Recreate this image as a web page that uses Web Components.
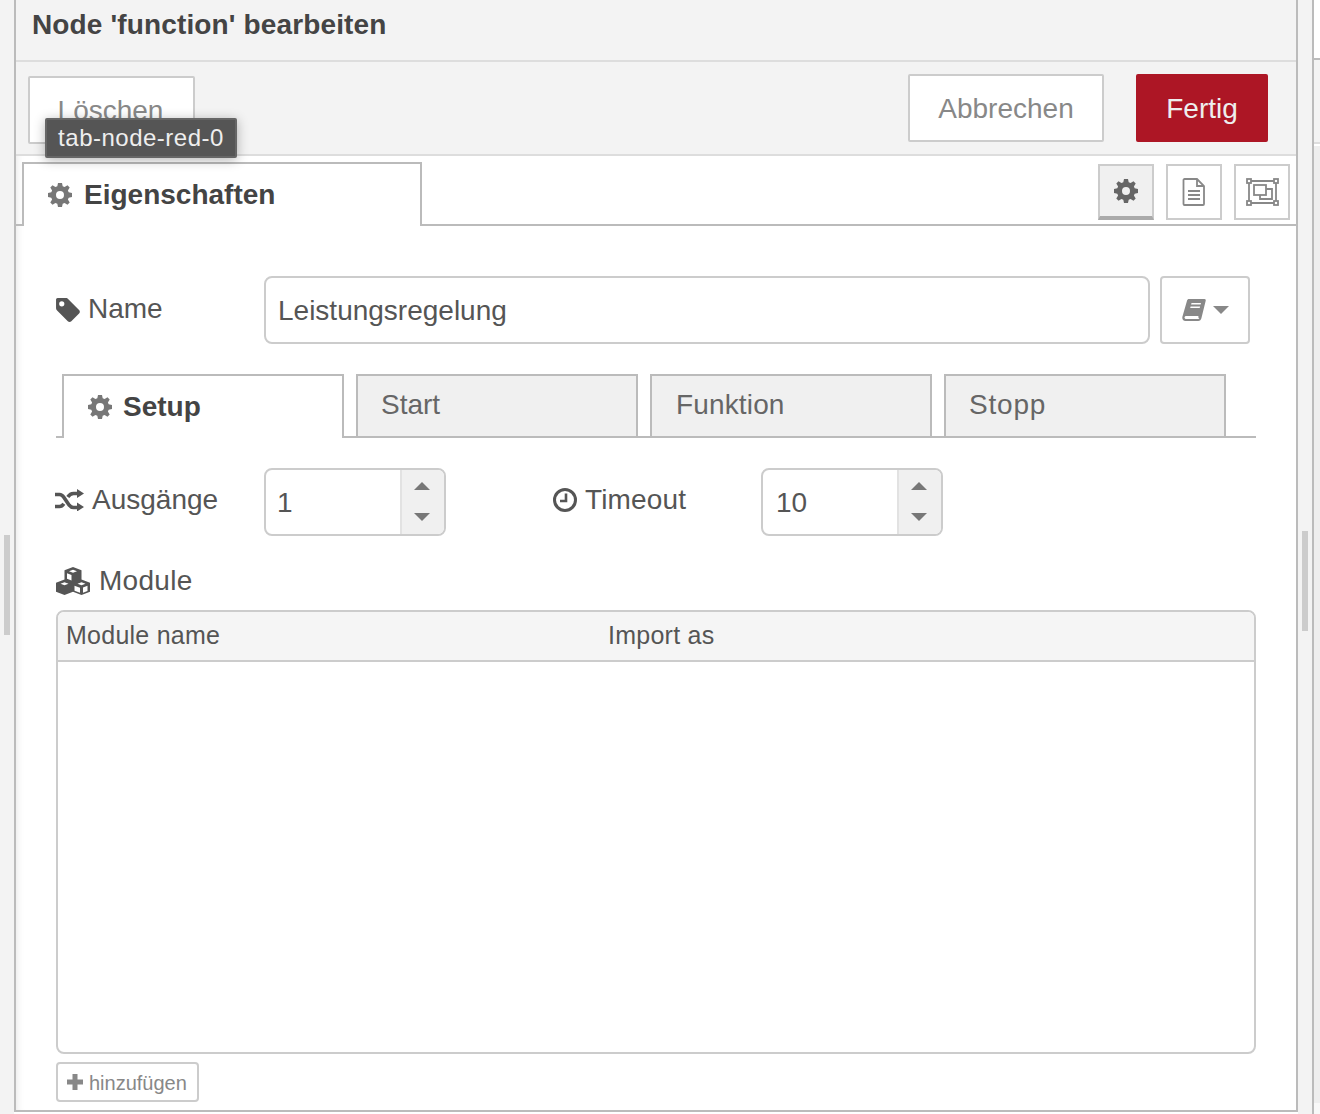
<!DOCTYPE html>
<html>
<head>
<meta charset="utf-8">
<title>Node 'function' bearbeiten</title>
<style>
  html, body { margin: 0; height: 100%; background: #fff; overflow: hidden; }
  body { font-family: "Liberation Sans", Arial, sans-serif; color: #555; }
</style>
</head>
<body>
<edit-tray></edit-tray>
<script>
const ICONS = {
  cog: `<svg viewBox="0 0 24 24" width="100%" height="100%"><path fill="currentColor" fill-rule="evenodd" d="M10 0h4l.7 3.3 1.900.8 2.900-1.800 2.200 2.200-1.800 2.900.8 1.900L24 10v4l-3.300.7-.8 1.900 1.800 2.900-2.200 2.200-2.900-1.800-1.900.8L14 24h-4l-.7-3.300-1.900-.8-2.900 1.800-2.200-2.200 1.800-2.900-.8-1.900L0 14v-4l3.300-.7.8-1.900-1.800-2.900 2.200-2.200 2.900 1.800 1.900-.8zM12 8a4 4 0 1 0 0 8 4 4 0 0 0 0-8z"/></svg>`,
  doc: `<svg viewBox="0 0 24 28" width="100%" height="100%" fill="none" stroke="currentColor" stroke-width="1.800"><path d="M2.500 1h12.500l7 7v18a1 1 0 0 1-1 1H2.500a1 1 0 0 1-1-1V2a1 1 0 0 1 1-1zM15 1v7h7"/><path d="M6 13h12M6 17h12M6 21h12"/></svg>`,
  frame: `<svg viewBox="0 0 33 28" width="100%" height="100%" fill="none" stroke="currentColor" stroke-width="1.800"><path d="M4 3h25M4 25h25M3 4v20M30 4v20"/><rect x="1" y="1" width="4" height="4" fill="#fff"/><rect x="28" y="1" width="4" height="4" fill="#fff"/><rect x="1" y="23" width="4" height="4" fill="#fff"/><rect x="28" y="23" width="4" height="4" fill="#fff"/><rect x="8" y="7" width="12" height="10"/><path d="M20 11h6v10H14v-4"/></svg>`,
  book: `<svg viewBox="0 0 24 24" width="100%" height="100%"><path fill="currentColor" fill-rule="evenodd" d="M7 1h15.500c1 0 1.500.8 1.200 1.800l-4.300 17.400c-.4 1.500-1.500 2.800-3.200 2.800H3.500C1.500 23 0 21.500.3 19.300c.1-.6.2-1 .4-1.500L5 2.700C5.300 1.700 6 1 7 1zM9.500 5l-.4 1.500h9.500L19 5zM8.600 8.500l-.4 1.500h9.500l.4-1.500zM4.500 18c-1.300 0-2 .7-2 1.500s.7 1.500 1.800 1.500h11.800c.6 0 1-.3 1.300-1-.4 0-.9-.1-1-.5-.2-.5-.1-1 .1-1.500z"/></svg>`,
  tag: `<svg viewBox="0 0 24 24" width="100%" height="100%"><path fill="currentColor" fill-rule="evenodd" d="M2.500 1h8c.9 0 1.700.5 2.300 1.100l10.300 10.300c1 1 1 2.500 0 3.500l-7.400 7.400c-1 .9-2.500.9-3.400 0L2 13c-.6-.6-1-1.500-1-2.300V2.500C1 1.700 1.700 1 2.500 1zM6.500 4a2.500 2.500 0 1 0 0 5 2.500 2.500 0 0 0 0-5z"/></svg>`,
  random: `<svg viewBox="0 0 29 22" width="100%" height="100%" fill="none" stroke="currentColor" stroke-width="3.600"><path d="M0 5.500h4.500c2 0 3.200 1 4.300 2.700l5.400 8c1 1.300 2.300 2.300 4.300 2.300h4.500"/><path d="M0 17.500h4.500c2 0 3.200-1 4.300-2.700M12.800 8c1.100-1.700 2.600-3.500 5.700-3.500h4.500"/><path fill="currentColor" stroke="none" d="M22 0l7 4.500-7 4.500zM22 13.500l7 4.500-7 4.500z"/></svg>`,
  clock: `<svg viewBox="0 0 24 24" width="100%" height="100%" fill="none" stroke="currentColor"><circle cx="12" cy="12" r="10.500" stroke-width="3"/><path stroke-width="2.600" d="M13 5.500v7.500H7"/></svg>`,
  cubes: `<svg viewBox="0 0 36 28" width="100%" height="100%"><path fill="currentColor" fill-rule="evenodd" d="M18 0l8.500 3.200v9.300l8.500 3.200v9L26.500 28 18 24.800 9.500 28 1 24.700v-9l8.500-3.200V3.200zM18 2.800l-4 1.400 4 1.500 4-1.500zM12 11.800l4.500 1.700V8l-4.500-1.700zM9.500 15.200l-4 1.500 4 1.500 4-1.500zM26.500 15.200l-4 1.500 4 1.500 4-1.500zM19.500 23.700l5.500 2v-5l-5.500-2zM28 25.700l4.500-1.800v-5.100l-4.500 1.800z"/></svg>`,
  plus: `<svg viewBox="0 0 16 16" width="100%" height="100%"><path fill="currentColor" d="M5.500 0h5v5.500H16v5h-5.500V16h-5v-5.500H0v-5h5.500z"/></svg>`
};

class RedIcon extends HTMLElement {
  connectedCallback() {
    this.attachShadow({ mode: "open" }).innerHTML = `
      <style>:host { display: inline-block; line-height: 0; flex: none; width: var(--w, 24px); height: var(--h, 24px); }</style>
      ${ICONS[this.getAttribute("name")]}`;
  }
}

class RedButton extends HTMLElement {
  constructor() {
    super();
    this.attachShadow({ mode: "open" }).innerHTML = `
      <style>
        :host {
          display: flex; align-items: center; justify-content: center; box-sizing: border-box;
          height: 68px; padding: 2px 28px 0; font-size: 28px; color: #888; background: #fff;
          border: 2px solid #ccc; border-radius: 2px;
        }
        :host([primary]) { background: #ad1625; border-color: #ad1625; color: #eee; }
      </style>
      <slot></slot>`;
  }
}

class NodeTab extends HTMLElement {
  constructor() {
    super();
    this.attachShadow({ mode: "open" }).innerHTML = `
      <style>
        :host {
          display: flex; align-items: center; box-sizing: border-box; width: 282px; height: 62px;
          padding: 0 24px 2px 23px; font-size: 28px; color: #666; background: #f0f0f0;
          border: 2px solid #bbb; border-bottom: 0;
        }
        :host([active]) { height: 64px; background: #fff; color: #444; font-weight: bold; padding: 0 24px; }
        ::slotted(red-icon) { margin-right: 12px; color: #777; --w: 24px; --h: 24px; }
      </style>
      <slot></slot>`;
  }
}

class IconToggle extends HTMLElement {
  constructor() {
    super();
    this.attachShadow({ mode: "open" }).innerHTML = `
      <style>
        :host {
          display: flex; align-items: center; justify-content: center; box-sizing: border-box;
          width: 56px; height: 56px; color: #888; background: #fff; border: 2px solid #ccc;
        }
        :host([selected]) { background: #f0f0f0; color: #666; border-bottom: 4px solid #aaa; }
      </style>
      <slot></slot>`;
  }
}

class SpinInput extends HTMLElement {
  constructor() {
    super();
    this.attachShadow({ mode: "open" }).innerHTML = `
      <style>
        :host {
          display: flex; box-sizing: border-box; width: 182px; height: 68px; font-size: 28px; color: #555;
          background: #fff; border: 2px solid #ccc; border-radius: 8px; overflow: hidden;
        }
        .value { flex: 1; padding-left: var(--pad, 11px); display: flex; align-items: center; padding-top: 2px; }
        .arrows {
          width: 44px; box-sizing: border-box; border-left: 2px solid #e2e2e2; background: #f0f0f0;
          display: flex; flex-direction: column; align-items: center; justify-content: space-between; padding: 12px 3px 13px 0;
        }
        .up, .down { width: 0; height: 0; border: 8px solid transparent; }
        .up { border-top: 0; border-bottom: 8px solid #777; }
        .down { border-bottom: 0; border-top: 8px solid #777; }
      </style>
      <div class="value"><slot></slot></div>
      <div class="arrows"><div class="up"></div><div class="down"></div></div>`;
  }
}

class FormLabel extends HTMLElement {
  constructor() {
    super();
    this.attachShadow({ mode: "open" }).innerHTML = `
      <style>
        :host { display: flex; align-items: center; font-size: 28px; color: #555; box-sizing: border-box; }
        ::slotted(red-icon) { margin-right: 8px; color: #555; }
      </style>
      <slot></slot>`;
  }
}

class ModuleTable extends HTMLElement {
  constructor() {
    super();
    this.attachShadow({ mode: "open" }).innerHTML = `
      <style>
        :host {
          display: flex; flex-direction: column; box-sizing: border-box; width: 1200px; height: 444px;
          border: 2px solid #ccc; border-radius: 8px; overflow: hidden; font-size: 25px; letter-spacing: .25px; color: #555;
        }
        .head {
          display: flex; align-items: center; box-sizing: border-box; height: 50px; flex: none;
          background: #f5f5f5; border-bottom: 2px solid #ccc; padding: 0 0 2px 8px;
        }
        .col { width: 542px; }
      </style>
      <div class="head"><div class="col">Module name</div><div>Import as</div></div>`;
  }
}

class ScrollGutter extends HTMLElement {
  constructor() {
    super();
    this.attachShadow({ mode: "open" }).innerHTML = `
      <style>
        :host { display: block; position: relative; flex: none; width: 14px; background: #f3f3f3; }
        .handle { position: absolute; left: 4px; width: 6px; height: 100px; top: var(--top); background: #ccc; }
      </style>
      <div class="handle"></div>`;
  }
}

class BackPanel extends HTMLElement {
  constructor() {
    super();
    this.attachShadow({ mode: "open" }).innerHTML = `
      <style>
        :host {
          display: flex; flex-direction: column; flex: 1; box-sizing: border-box; border-left: 2px solid #bbb; background: #fff;
        }
        .blank { height: 58px; }
        .head { background: #f3f3f3; border-top: 2px solid #bbb; height: 82px; }
        .rule { height: 2px; background: #ddd; margin-bottom: 2px; }
        .fill { height: 957px; background: #eee; }
        .foot { flex: 1; background: #f8f8f8; }
      </style>
      <div class="blank"></div><div class="head"></div><div class="rule"></div><div class="fill"></div><div class="foot"></div>`;
  }
}

class EditTray extends HTMLElement {
  constructor() {
    super();
    this.attachShadow({ mode: "open" }).innerHTML = `
      <style>
        :host { display: flex; height: 1114px; width: 1320px; }
        .tray {
          flex: none; width: 1284px; box-sizing: border-box; height: 1112px;
          border: 2px solid #bbb; border-width: 0 2px 2px 2px; background: #fff;
          box-shadow: inset 8px 0 8px -8px rgba(0,0,0,.12);
          display: flex; flex-direction: column; position: relative;
        }
        h1 {
          margin: 0; height: 62px; box-sizing: border-box; flex: none; padding: 8px 0 0 16px;
          font-size: 28px; line-height: 34px; font-weight: bold; color: #444; background: #f3f3f3;
          border-bottom: 2px solid #ddd; letter-spacing: .14px;
        }
        .toolbar {
          flex: none; height: 94px; box-sizing: border-box; background: #f3f3f3; border-bottom: 2px solid #ddd;
          display: flex; padding: 12px 28px 0 12px; gap: 32px;
        }
        .spacer { flex: 1; }
        .del { width: 167px; margin-top: 2px; height: 68px; padding-right: 30px; }
        .cancel { width: 196px; }
        .done { width: 132px; }
        .tip {
          position: absolute; left: 29px; top: 118px; box-sizing: border-box; width: 192px; height: 40px;
          background: #555; border: 2px solid #666; color: #eee; font-size: 24px; letter-spacing: .5px;
          display: flex; align-items: center; justify-content: center; border-radius: 2px;
          box-shadow: 0 2px 12px rgba(0,0,0,.3);
        }
        .tabbar {
          flex: none; height: 68px; display: flex; align-items: flex-end; border-bottom: 2px solid #bbb; box-sizing: content-box;
          padding: 0 6px;
        }
        .main-tab {
          width: 400px; height: 64px; font-size: 28px; margin-bottom: -2px; box-sizing: border-box;
          display: flex; align-items: center;
        }
        .toggles { margin-left: auto; display: flex; gap: 12px; align-self: flex-start; padding-top: 8px; }
        .body { flex: 1; padding: 50px 40px 0; display: flex; flex-direction: column; }
        .row { display: flex; align-items: center; }
        .name-row { height: 68px; }
        .lbl { width: 208px; height: 68px; padding-bottom: 4px; }
        .name-row .lbl { padding-bottom: 2px; }
        .name {
          box-sizing: border-box; width: 886px; height: 68px; border: 2px solid #ccc; border-radius: 8px;
          display: flex; align-items: center; padding-left: 12px; font-size: 28px; color: #555; padding-top: 2px;
        }
        .lib {
          box-sizing: border-box; width: 90px; height: 68px; margin-left: 10px; border: 2px solid #ccc; border-radius: 4px;
          display: flex; align-items: center; justify-content: center; gap: 6px; color: #888;
        }
        .caret { width: 0; height: 0; border: 8px solid transparent; border-bottom: 0; border-top: 8px solid #888; }
        .subtabs {
          display: flex; gap: 12px; height: 64px; width: 1200px; margin-top: 30px; box-sizing: border-box;
          border-bottom: 2px solid #bbb; padding-left: 6px;
        }
        .subtabs .stopp { letter-spacing: .8px; }
        .subtabs .funktion { letter-spacing: .15px; padding-left: 24px; }
        .spin-row { margin-top: 30px; height: 68px; }
        .timeout { width: 208px; margin-left: 107px; letter-spacing: .15px; }
        .module-lbl { margin-top: 28px; height: 34px; letter-spacing: .3px; }
        module-table { margin-top: 12px; }
        .add {
          box-sizing: border-box; width: 143px; height: 40px; margin-top: 8px; border: 2px solid #ccc; border-radius: 4px;
          display: flex; align-items: center; gap: 6px; padding: 2px 0 0 9px; font-size: 20px; color: #888;
        }
        .add red-icon { --w: 16px; --h: 16px; color: #888; margin-top: -2px; }
      </style>
      <scroll-gutter style="--top:535px"></scroll-gutter>
      <div class="tray">
        <h1>Node 'function' bearbeiten</h1>
        <div class="toolbar">
          <red-button class="del">Löschen</red-button>
          <div class="spacer"></div>
          <red-button class="cancel">Abbrechen</red-button>
          <red-button class="done" primary>Fertig</red-button>
        </div>
        <div class="tabbar">
          <node-tab class="main-tab" active><red-icon name="cog"></red-icon>Eigenschaften</node-tab>
          <div class="toggles">
            <icon-toggle selected><red-icon name="cog" style="--w:24px;--h:24px"></red-icon></icon-toggle>
            <icon-toggle><red-icon name="doc" style="--w:24px;--h:28px"></red-icon></icon-toggle>
            <icon-toggle><red-icon name="frame" style="--w:33px;--h:28px"></red-icon></icon-toggle>
          </div>
        </div>
        <div class="body">
          <div class="row name-row">
            <form-label class="lbl"><red-icon name="tag" style="margin-left:-1px;--w:25px;--h:25px"></red-icon>Name</form-label>
            <div class="name">Leistungsregelung</div>
            <div class="lib"><red-icon name="book" style="--w:26px;--h:24px"></red-icon><div class="caret"></div></div>
          </div>
          <div class="subtabs">
            <node-tab active><red-icon name="cog" style="margin-right:11px"></red-icon>Setup</node-tab>
            <node-tab>Start</node-tab>
            <node-tab class="funktion">Funktion</node-tab>
            <node-tab class="stopp">Stopp</node-tab>
          </div>
          <div class="row spin-row">
            <form-label class="lbl"><red-icon name="random" style="margin-left:-1px;--w:29px;--h:22px"></red-icon>Ausgänge</form-label>
            <spin-input>1</spin-input>
            <form-label class="lbl timeout"><red-icon name="clock"></red-icon>Timeout</form-label>
            <spin-input style="--pad:13px">10</spin-input>
          </div>
          <form-label class="module-lbl"><red-icon name="cubes" style="margin-left:-1px;--w:36px;--h:28px"></red-icon>Module</form-label>
          <module-table></module-table>
          <div class="add"><red-icon name="plus"></red-icon>hinzufügen</div>
        </div>
        <div class="tip">tab-node-red-0</div>
      </div>
      <scroll-gutter style="--top:531px"></scroll-gutter>
      <back-panel></back-panel>`;
  }
}

customElements.define("red-icon", RedIcon);
customElements.define("red-button", RedButton);
customElements.define("node-tab", NodeTab);
customElements.define("icon-toggle", IconToggle);
customElements.define("spin-input", SpinInput);
customElements.define("form-label", FormLabel);
customElements.define("module-table", ModuleTable);
customElements.define("scroll-gutter", ScrollGutter);
customElements.define("back-panel", BackPanel);
customElements.define("edit-tray", EditTray);
</script>
</body>
</html>
